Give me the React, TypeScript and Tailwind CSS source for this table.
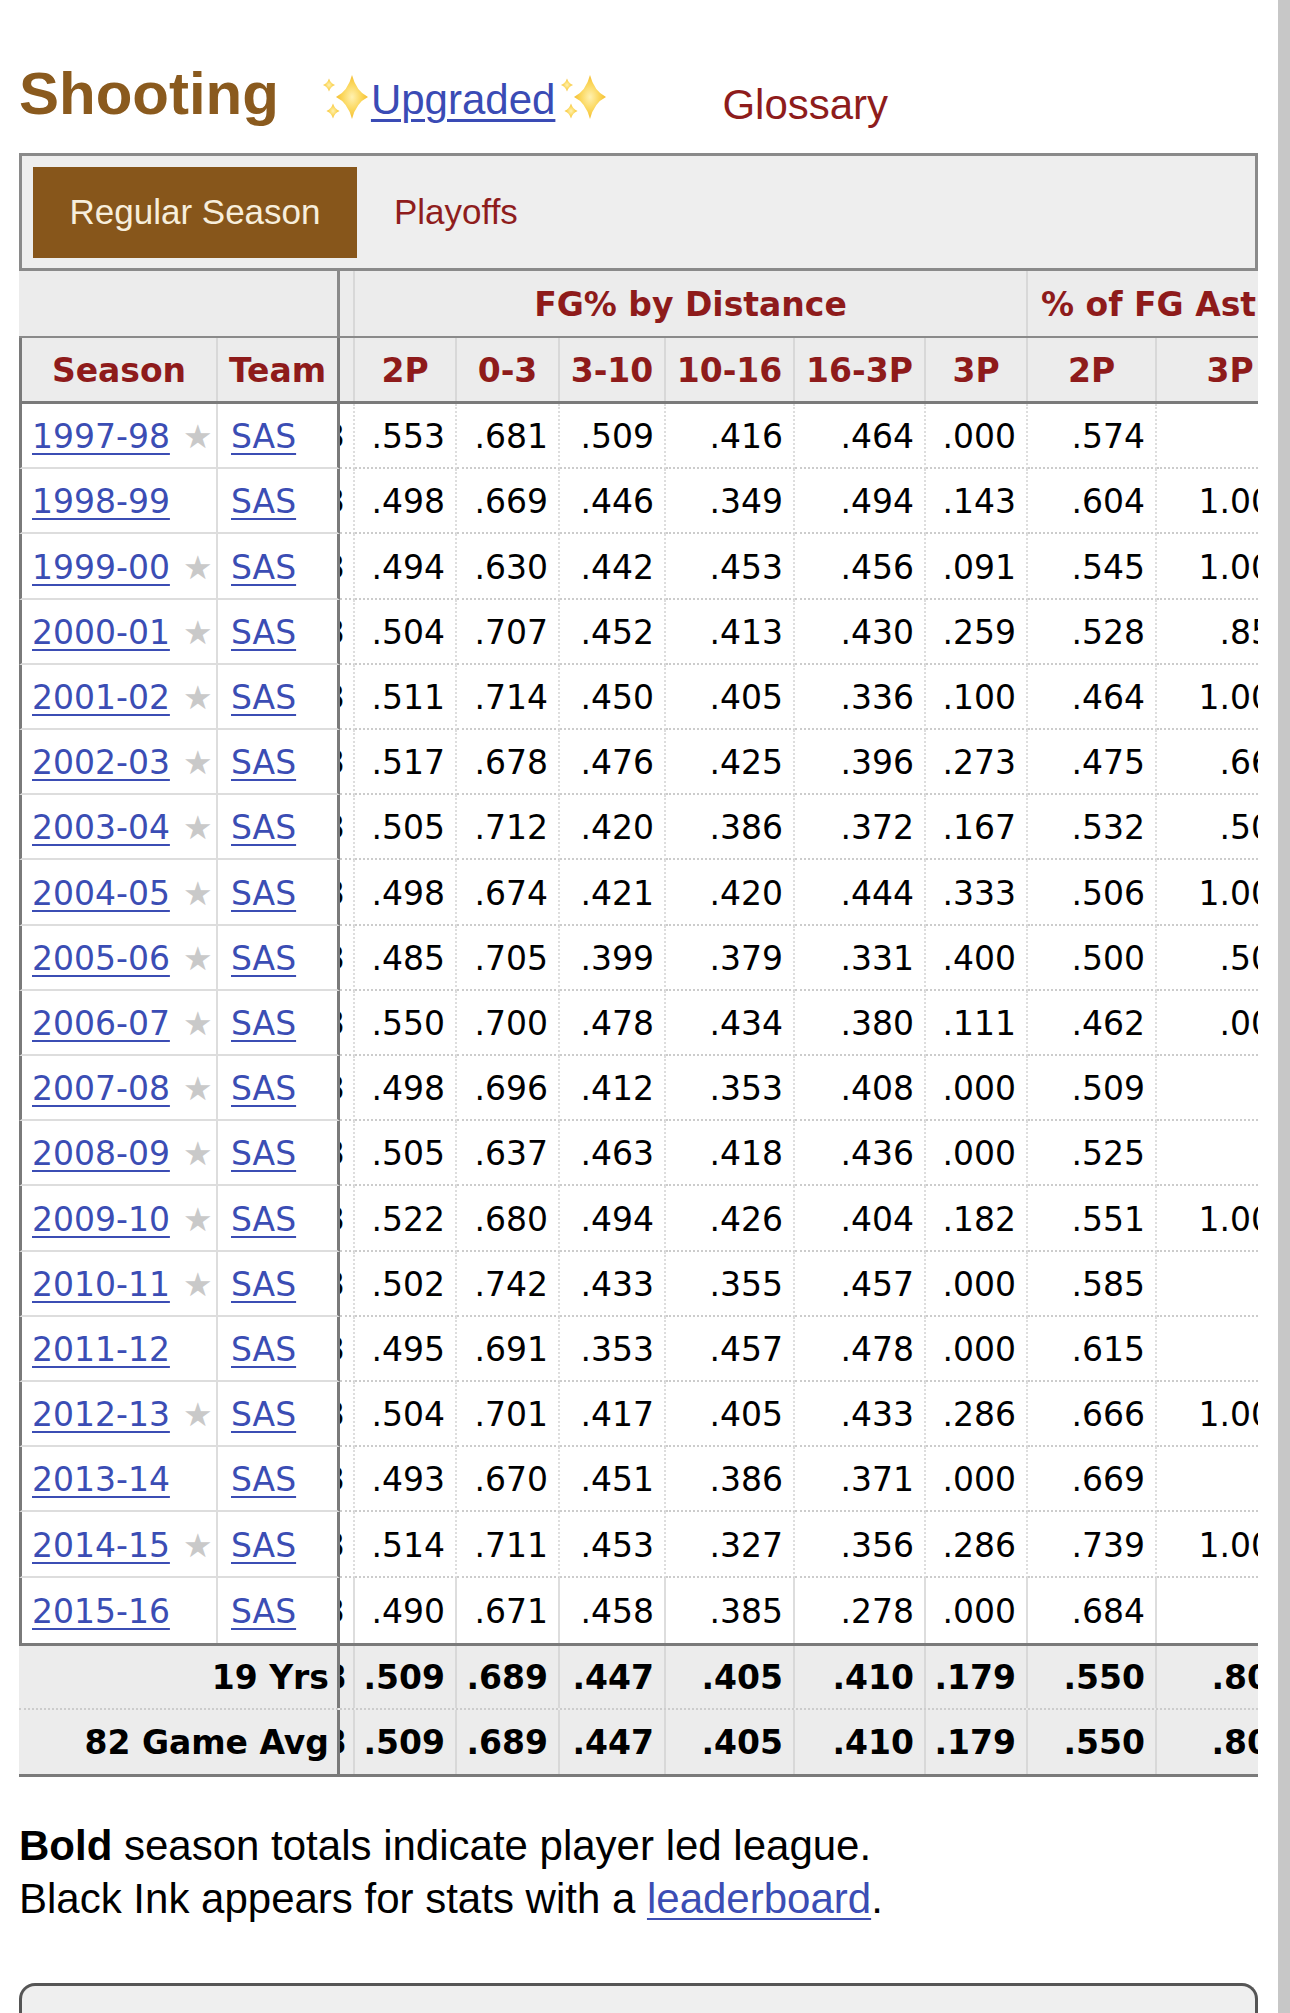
import React from "react";

type Row = {
  season: string;
  star: boolean;
  stats: string[];
};

const rows: Row[] = [
  { season: "1997-98", star: true, stats: [".553", ".681", ".509", ".416", ".464", ".000", ".574", ""] },
  { season: "1998-99", star: false, stats: [".498", ".669", ".446", ".349", ".494", ".143", ".604", "1.000"] },
  { season: "1999-00", star: true, stats: [".494", ".630", ".442", ".453", ".456", ".091", ".545", "1.000"] },
  { season: "2000-01", star: true, stats: [".504", ".707", ".452", ".413", ".430", ".259", ".528", ".857"] },
  { season: "2001-02", star: true, stats: [".511", ".714", ".450", ".405", ".336", ".100", ".464", "1.000"] },
  { season: "2002-03", star: true, stats: [".517", ".678", ".476", ".425", ".396", ".273", ".475", ".667"] },
  { season: "2003-04", star: true, stats: [".505", ".712", ".420", ".386", ".372", ".167", ".532", ".500"] },
  { season: "2004-05", star: true, stats: [".498", ".674", ".421", ".420", ".444", ".333", ".506", "1.000"] },
  { season: "2005-06", star: true, stats: [".485", ".705", ".399", ".379", ".331", ".400", ".500", ".500"] },
  { season: "2006-07", star: true, stats: [".550", ".700", ".478", ".434", ".380", ".111", ".462", ".000"] },
  { season: "2007-08", star: true, stats: [".498", ".696", ".412", ".353", ".408", ".000", ".509", ""] },
  { season: "2008-09", star: true, stats: [".505", ".637", ".463", ".418", ".436", ".000", ".525", ""] },
  { season: "2009-10", star: true, stats: [".522", ".680", ".494", ".426", ".404", ".182", ".551", "1.000"] },
  { season: "2010-11", star: true, stats: [".502", ".742", ".433", ".355", ".457", ".000", ".585", ""] },
  { season: "2011-12", star: false, stats: [".495", ".691", ".353", ".457", ".478", ".000", ".615", ""] },
  { season: "2012-13", star: true, stats: [".504", ".701", ".417", ".405", ".433", ".286", ".666", "1.000"] },
  { season: "2013-14", star: false, stats: [".493", ".670", ".451", ".386", ".371", ".000", ".669", ""] },
  { season: "2014-15", star: true, stats: [".514", ".711", ".453", ".327", ".356", ".286", ".739", "1.000"] },
  { season: "2015-16", star: false, stats: [".490", ".671", ".458", ".385", ".278", ".000", ".684", ""] },
];

const totals = [".509", ".689", ".447", ".405", ".410", ".179", ".550", ".800"];
const cols = ["2P", "0-3", "3-10", "10-16", "16-3P", "3P", "2P", "3P"];

const grid =
  "grid grid-cols-[199px_122px_15px_102px_103px_106px_129px_131px_102px_129px_148px]";

function Sparkles() {
  const star = (cx: number, cy: number, rx: number, ry: number) => {
    const a = rx * 0.26;
    const b = ry * 0.26;
    return `M${cx} ${cy - ry} Q${cx + a} ${cy - b} ${cx + rx} ${cy} Q${cx + a} ${cy + b} ${cx} ${cy + ry} Q${cx - a} ${cy + b} ${cx - rx} ${cy} Q${cx - a} ${cy - b} ${cx} ${cy - ry}Z`;
  };
  return (
    <svg width="48" height="46" viewBox="0 0 48 46" className="inline-block align-[-7px]">
      <defs>
        <radialGradient id="spk" cx="0.5" cy="0.5" r="0.6">
          <stop offset="0" stopColor="#fff1b0" />
          <stop offset="0.5" stopColor="#fbd65a" />
          <stop offset="1" stopColor="#f1b21f" />
        </radialGradient>
      </defs>
      <path d={star(32, 22, 16, 22)} fill="url(#spk)" />
      <path d={star(9, 10, 6, 6.5)} fill="url(#spk)" />
      <path d={star(13, 36, 6.5, 7.5)} fill="url(#spk)" />
    </svg>
  );
}

function Fragment({ bold }: { bold?: boolean }) {
  return (
    <div className="w-[5px] overflow-hidden">
      <span className={`block -ml-[16px] ${bold ? "font-bold" : ""}`}>3</span>
    </div>
  );
}

export default function App() {
  return (
    <div className="flex h-[2013px] w-[1290px] overflow-hidden bg-white font-['Liberation_Sans',Arial,sans-serif] text-black">
      <div className="w-[1278px] pl-[19px]">
        <div className="h-[153px] whitespace-nowrap pt-[64px] text-[60px] leading-[60px]">
          <span className="font-bold text-[#8a5a1e]">Shooting</span>
          <span className="ml-[41px] text-[42px] leading-none">
            <Sparkles />
            <a className="mx-[3px] text-[#3a4bb5] underline decoration-[3px] underline-offset-[5px]">Upgraded</a>
            <Sparkles />
          </span>
          <a className="ml-[116px] align-[-5px] text-[42px] leading-none text-[#8e1c1c]">Glossary</a>
        </div>

        <div className="flex w-[1239px] border-[3px] border-[#8a8a8a] bg-[#eeeeee] px-[11px] pb-[10px] pt-[11px]">
          <div className="flex h-[91px] w-[324px] items-center justify-center bg-[#87561b] text-[35px] text-[#f7eedc]">
            Regular Season
          </div>
          <div className="flex h-[91px] items-center px-[37px] text-[35px] text-[#8f1d1d]">Playoffs</div>
        </div>

        <div className="w-[1239px] overflow-hidden font-['DejaVu_Sans',Verdana,sans-serif] text-[33px]">
          <div className="w-[1287px]">
            {/* group header */}
            <div className="grid h-[67px] grid-cols-[321px_15px_673px_278px] border-b-2 border-[#8a8a8a] bg-[#ececec] font-bold text-[#8e1b1b]">
              <div className="border-r-[3px] border-[#8a8a8a]" />
              <div className="border-r-2 border-[#d8d8d8]" />
              <div className="flex items-center justify-center border-r-2 border-[#d8d8d8] pt-[3px]">FG% by Distance</div>
              <div className="flex items-center pl-[13px] pt-[3px]">% of FG Ast</div>
            </div>

            {/* column header */}
            <div className={`${grid} h-[66px] border-b-[3px] border-[#7a7a7a] bg-[#ececec] font-bold text-[#8e1b1b]`}>
              <div className="flex items-center justify-center border-l-[3px] border-r-2 border-[#7a7a7a] border-r-[#d8d8d8] pt-[3px]">Season</div>
              <div className="flex items-center justify-center border-r-[3px] border-[#7a7a7a] pt-[3px]">Team</div>
              <div className="border-r-2 border-[#d8d8d8]" />
              {cols.map((c, i) => (
                <div key={i} className="flex items-center justify-center border-r-2 border-[#d8d8d8] pt-[3px]">
                  {c}
                </div>
              ))}
            </div>

            {/* body */}
            <div className="border-b-[3px] border-[#7a7a7a]">
              {rows.map((r, i) => {
                const last = i === rows.length - 1;
                const h = i % 5 === 2 ? "h-[66px]" : "h-[65px]";
                return (
                  <div key={r.season} className={`${grid} ${h}`}>
                    <div
                      className={`flex items-center border-l-[3px] border-r-2 border-l-[#7a7a7a] border-r-[#dddddd] pl-[10px] pt-[3px] ${
                        last ? "" : "border-b-2 border-b-[#dddddd]"
                      }`}
                    >
                      <a className="text-[#3b4db4] underline decoration-2 underline-offset-[5px]">{r.season}</a>
                      {r.star && <span className="ml-[13px] text-[#c9c9c9]">★</span>}
                    </div>
                    <div
                      className={`flex items-center border-r-[3px] border-r-[#7a7a7a] pl-[13px] pt-[3px] ${
                        last ? "" : "border-b-2 border-b-[#dddddd]"
                      }`}
                    >
                      <a className="text-[#3b4db4] underline decoration-2 underline-offset-[5px]">SAS</a>
                    </div>
                    <div
                      className={`flex items-center border-r-2 border-r-[#dddddd] pt-[3px] ${
                        last ? "" : "border-b-2 border-dotted border-b-[#cccccc]"
                      }`}
                    >
                      <Fragment />
                    </div>
                    {r.stats.map((s, j) => (
                      <div
                        key={j}
                        className={`flex items-center justify-end border-r-2 border-r-[#dddddd] pr-[10px] pt-[3px] ${
                          last ? "" : "border-b-2 border-dotted border-b-[#cccccc]"
                        }`}
                      >
                        {s}
                      </div>
                    ))}
                  </div>
                );
              })}
            </div>

            {/* totals */}
            <div className="border-b-[3px] border-[#7a7a7a] bg-[#ececec] font-bold">
              {["19 Yrs", "82 Game Avg"].map((label, i) => (
                <div
                  key={label}
                  className={`grid h-[64px] grid-cols-[321px_15px_102px_103px_106px_129px_131px_102px_129px_148px] ${
                    i === 0 ? "border-b-2 border-dotted border-[#cccccc]" : ""
                  }`}
                >
                  <div className="flex items-center justify-end border-r-[3px] border-[#7a7a7a] pr-[8px] pt-[2px]">{label}</div>
                  <div className="flex items-center border-r-2 border-[#d8d8d8] pt-[2px]">
                    <Fragment bold />
                  </div>
                  {totals.map((t, j) => (
                    <div key={j} className="flex items-center justify-end border-r-2 border-[#d8d8d8] pr-[10px] pt-[2px]">
                      {t}
                    </div>
                  ))}
                </div>
              ))}
            </div>
          </div>
        </div>

        <div className="mt-[42px] text-[42px] leading-[53px]">
          <p>
            <b>Bold</b> season totals indicate player led league.
          </p>
          <p>
            Black Ink appears for stats with a{" "}
            <a className="text-[#3b4db4] underline decoration-2 underline-offset-[5px]">leaderboard</a>.
          </p>
        </div>

        <div className="mt-[58px] h-[80px] w-[1239px] rounded-t-[16px] border-[3px] border-b-0 border-[#555555] bg-[#efefef]" />
      </div>
      <div className="w-[12px] bg-[#c7c7c7]" />
    </div>
  );
}
